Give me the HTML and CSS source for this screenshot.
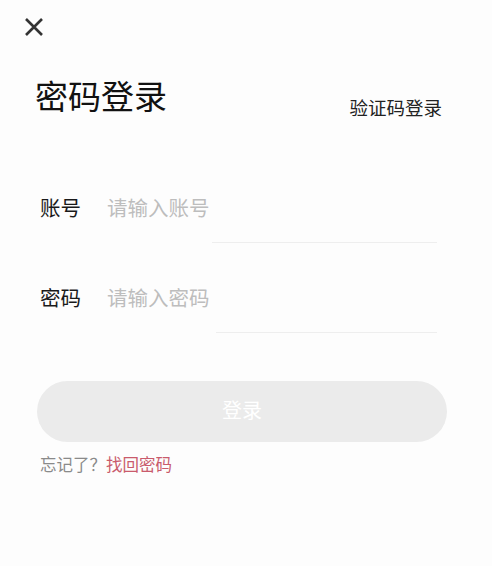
FILE: index.html
```html
<!DOCTYPE html>
<html lang="zh-CN">
<head>
<meta charset="utf-8">
<title>密码登录</title>
<link rel="stylesheet" href="styles.css">
</head>
<body>
<div class="page">
  <div class="topbar">
    <svg class="close" width="20" height="20" viewBox="0 0 20 20" aria-label="关闭">
      <path d="M2 2 L18 18 M18 2 L2 18" stroke="#333" stroke-width="2.6" stroke-linecap="butt" fill="none"/>
    </svg>
  </div>
  <div class="title-row">
    <h1 class="title">密码登录</h1>
    <a class="switch">验证码登录</a>
  </div>
  <div class="form">
    <div class="field">
      <div class="field-line">
        <span class="label">账号</span>
        <span class="placeholder">请输入账号</span>
      </div>
      <div class="underline"></div>
    </div>
    <div class="field field-second">
      <div class="field-line">
        <span class="label">密码</span>
        <span class="placeholder">请输入密码</span>
      </div>
      <div class="underline underline-second"></div>
    </div>
  </div>
  <button class="login-btn">登录</button>
  <p class="forgot">忘记了？<a class="recover">找回密码</a></p>
</div>
</body>
</html>
```
FILE: styles.css
```css
html, body {
  margin: 0;
  padding: 0;
  background: #fdfdfd;
}
body {
  font-family: "Noto Sans CJK SC", "Noto Sans", sans-serif;
  color: #111;
  width: 492px;
  height: 566px;
  overflow: hidden;
}
.page {
  display: flex;
  flex-direction: column;
}
.topbar {
  padding: 17px 0 0 24px;
  height: 20px;
}
.close {
  display: block;
}
.title-row {
  display: flex;
  justify-content: space-between;
  align-items: flex-start;
  margin-top: 38px;
  padding: 0 50px 0 35px;
}
.title {
  margin: 0;
  font-size: 33px;
  line-height: 40px;
  font-weight: normal;
  color: #111;
}
.switch {
  margin-top: 20px;
  font-size: 18.5px;
  line-height: 24px;
  color: #222;
}
.form {
  margin-top: 74px;
  display: flex;
  flex-direction: column;
}
.field-second {
  margin-top: 40px;
}
.field-line {
  display: flex;
  align-items: center;
  padding-left: 40px;
  font-size: 20.5px;
  line-height: 28px;
}
.label {
  width: 67px;
  color: #1a1a1a;
}
.placeholder {
  color: #bdbdbd;
}
.underline {
  height: 1px;
  background: #eeeeee;
  margin: 21px 55px 0 212px;
}
.underline-second {
  margin-top: 21px;
  margin-left: 216px;
}
.login-btn {
  margin: 48px 0 0 37px;
  width: 410px;
  height: 61px;
  border: none;
  border-radius: 31px;
  background: #ebebeb;
  color: #ffffff;
  font-family: "Noto Sans CJK SC", "Noto Sans", sans-serif;
  font-size: 20px;
  padding: 0 0 4px 0;
}
.forgot {
  margin: 11px 0 0 40px;
  font-size: 16.5px;
  line-height: 22px;
  color: #8a8a8a;
}
.recover {
  color: #c95b6c;
}
```
